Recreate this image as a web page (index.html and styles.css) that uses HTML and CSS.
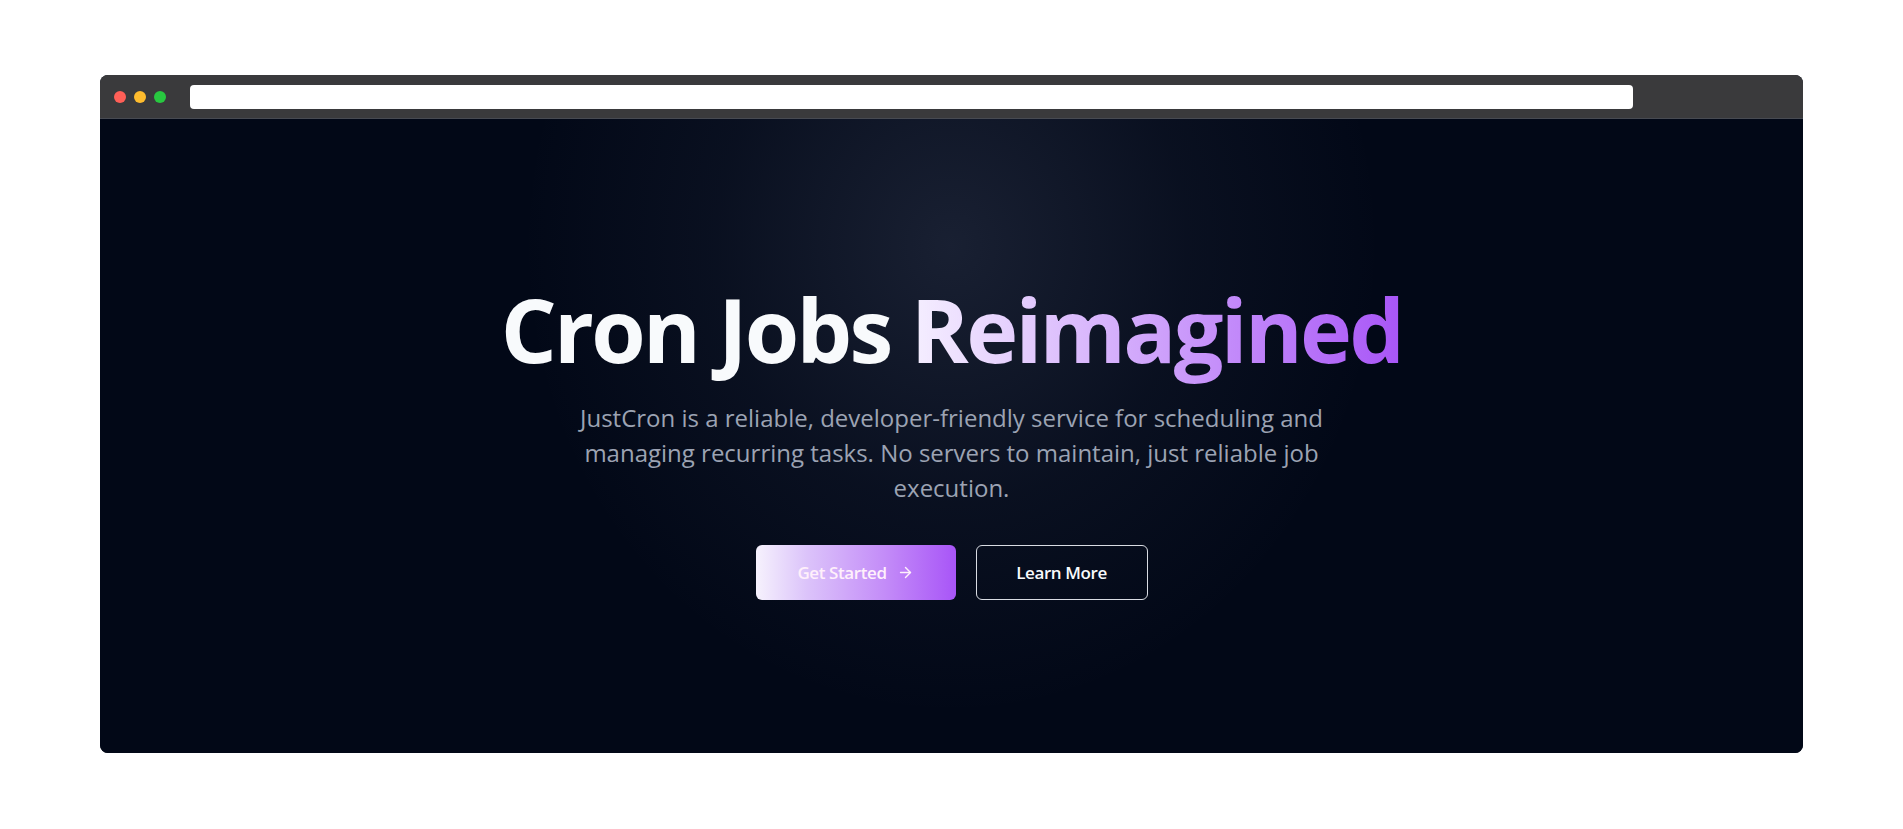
FILE: index.html
```html
<!DOCTYPE html>
<html lang="en">
<head>
<meta charset="utf-8">
<title>JustCron</title>
<link rel="stylesheet" href="styles.css">
</head>
<body>
<div class="page">
  <div class="window">
    <div class="titlebar">
      <div class="dots">
        <span class="dot red"></span>
        <span class="dot yellow"></span>
        <span class="dot green"></span>
      </div>
      <div class="address"></div>
    </div>
    <main class="hero">
      <div class="hero-inner">
        <h1 class="title">Cron Jobs <span class="grad">Reimagined</span></h1>
        <p class="lead">JustCron is a reliable, developer-friendly service for scheduling and managing recurring tasks. No servers to maintain, just reliable job execution.</p>
        <div class="actions">
          <a class="btn btn-primary" href="#">Get Started
            <svg class="arrow" viewBox="0 0 24 24" width="17" height="17" fill="none" stroke="currentColor" stroke-width="2" stroke-linecap="round" stroke-linejoin="round"><path d="M5 12h14"/><path d="m12 5 7 7-7 7"/></svg>
          </a>
          <a class="btn btn-outline" href="#">Learn More</a>
        </div>
      </div>
    </main>
  </div>
</div>
</body>
</html>
```

FILE: styles.css
```css
* { box-sizing: border-box; }
html, body { margin: 0; padding: 0; background: #ffffff; }
body { font-family: "Open Sans", "Noto Sans", sans-serif; }

.page {
  height: 829px;
  padding: 75px 100px 76px;
  display: flex;
}

.window {
  flex: 1;
  display: flex;
  flex-direction: column;
  border-radius: 8px;
  overflow: hidden;
  background: #020817;
}

.titlebar {
  height: 44px;
  flex: none;
  background: #3a3a3c;
  border-bottom: 1px solid #474a52;
  display: flex;
  align-items: center;
  padding: 0 170px 0 14px;
}

.dots { display: flex; gap: 8px; }
.dot { width: 12px; height: 12px; border-radius: 50%; display: block; }
.red { background: #ff5f57; }
.yellow { background: #febc2e; }
.green { background: #28c840; }

.address {
  flex: 1;
  height: 24px;
  margin-left: 24px;
  background: #ffffff;
  border-radius: 4px;
}

.hero {
  flex: 1;
  display: flex;
  align-items: center;
  justify-content: center;
  padding-top: 9px;
  background:
    radial-gradient(ellipse 430px 470px at 50% 20%, rgba(155, 168, 205, 0.15), rgba(148, 163, 200, 0.05) 55%, rgba(2, 8, 23, 0) 100%),
    #020817;
}

.hero-inner {
  display: flex;
  flex-direction: column;
  align-items: center;
  text-align: center;
  max-width: 768px;
}

.title {
  margin: 0;
  font-size: 88px;
  line-height: 97px;
  font-weight: 700;
  letter-spacing: -2.7px;
  color: #f8fafc;
  white-space: nowrap;
}

.grad {
  background: linear-gradient(90deg, #f5efff 0%, #a855f7 100%);
  -webkit-background-clip: text;
  background-clip: text;
  color: transparent;
}

.lead {
  margin: 22px 0 0;
  font-size: 24px;
  line-height: 35px;
  color: #9ca3b3;
}

.actions {
  display: flex;
  gap: 20px;
  margin-top: 40px;
}

.btn {
  height: 55px;
  display: inline-flex;
  align-items: center;
  justify-content: center;
  gap: 10px;
  padding: 0 40px;
  border-radius: 6px;
  font-size: 17px;
  font-weight: 600;
  text-decoration: none;
  letter-spacing: -0.4px;
  white-space: nowrap;
}

.btn-primary {
  width: 200px;
  color: #fff0fb;
  background: linear-gradient(90deg, #f6f2fd 0%, #dcc4fa 25%, #c38bf8 65%, #a855f7 100%);
}

.btn-outline {
  width: 172px;
  color: #f8fafc;
  border: 1px solid #d9dce3;
  background: transparent;
}
```
